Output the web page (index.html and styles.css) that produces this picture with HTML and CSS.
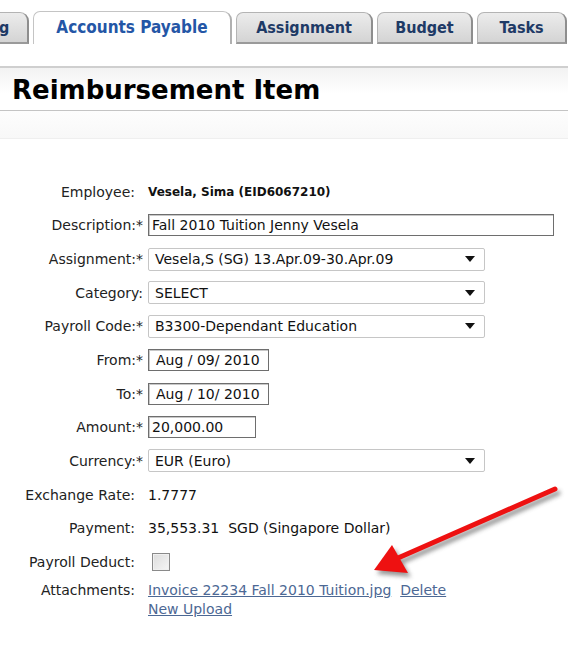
FILE: index.html
```html
<!DOCTYPE html>
<html>
<head>
<meta charset="utf-8">
<link rel="stylesheet" href="styles.css">
</head>
<body>
<div class="page">
  <div class="tabs">
    <div class="tab tab-first">g</div>
    <div class="tab tab-active">Accounts Payable</div>
    <div class="tab tab-assign">Assignment</div>
    <div class="tab tab-budget">Budget</div>
    <div class="tab tab-tasks">Tasks</div>
  </div>
  <div class="header"><h1>Reimbursement Item</h1></div>
  <div class="subband"></div>

  <div class="form">
    <div class="row">
      <div class="label label-static">Employee:</div>
      <div class="value bold">Vesela, Sima (EID6067210)</div>
    </div>
    <div class="row">
      <div class="label">Description:*</div>
      <div class="value"><div class="input input-desc">Fall 2010 Tuition Jenny Vesela</div></div>
    </div>
    <div class="row">
      <div class="label">Assignment:*</div>
      <div class="value"><div class="select"><span>Vesela,S (SG) 13.Apr.09-30.Apr.09</span><svg class="caret" width="10" height="6" viewBox="0 0 10 6"><path d="M0 0H10L5 6Z" fill="#111"/></svg></div></div>
    </div>
    <div class="row">
      <div class="label">Category:</div>
      <div class="value"><div class="select"><span>SELECT</span><svg class="caret" width="10" height="6" viewBox="0 0 10 6"><path d="M0 0H10L5 6Z" fill="#111"/></svg></div></div>
    </div>
    <div class="row">
      <div class="label">Payroll Code:*</div>
      <div class="value"><div class="select"><span>B3300-Dependant Education</span><svg class="caret" width="10" height="6" viewBox="0 0 10 6"><path d="M0 0H10L5 6Z" fill="#111"/></svg></div></div>
    </div>
    <div class="row">
      <div class="label">From:*</div>
      <div class="value"><div class="input input-date">Aug / 09/ 2010</div></div>
    </div>
    <div class="row">
      <div class="label">To:*</div>
      <div class="value"><div class="input input-date">Aug / 10/ 2010</div></div>
    </div>
    <div class="row">
      <div class="label">Amount:*</div>
      <div class="value"><div class="input input-amount">20,000.00</div></div>
    </div>
    <div class="row">
      <div class="label">Currency:*</div>
      <div class="value"><div class="select"><span>EUR (Euro)</span><svg class="caret" width="10" height="6" viewBox="0 0 10 6"><path d="M0 0H10L5 6Z" fill="#111"/></svg></div></div>
    </div>
    <div class="row">
      <div class="label label-static">Exchange Rate:</div>
      <div class="value">1.7777</div>
    </div>
    <div class="row">
      <div class="label label-static">Payment:</div>
      <div class="value">35,553.31&nbsp; SGD (Singapore Dollar)</div>
    </div>
    <div class="row">
      <div class="label label-static">Payroll Deduct:</div>
      <div class="value"><div class="checkbox"></div></div>
    </div>
    <div class="row row-attach">
      <div class="label label-static">Attachments:</div>
      <div class="value attach">
        <div><a href="#">Invoice 22234 Fall 2010 Tuition.jpg</a>&nbsp; <a href="#">Delete</a></div>
        <div><a href="#">New Upload</a></div>
      </div>
    </div>
  </div>

  <svg class="arrow" width="568" height="648" viewBox="0 0 568 648">
    <defs>
      <filter id="sh" x="-20%" y="-20%" width="140%" height="140%">
        <feGaussianBlur stdDeviation="2"/>
      </filter>
    </defs>
    <g transform="translate(3,4)" fill="#555" stroke="#555" opacity="0.6" filter="url(#sh)">
      <line x1="555" y1="489" x2="400" y2="557" stroke-width="5" stroke-linecap="round"/>
      <path d="M374 570 L392 545 L408 573 Z" stroke="none"/>
    </g>
    <line x1="555" y1="489" x2="398" y2="558" stroke="#ee1111" stroke-width="5" stroke-linecap="round"/>
    <path d="M374 570 L392 545 L408 573 Z" fill="#ee1111"/>
  </svg>
</div>
</body>
</html>
```

FILE: styles.css
```css
html, body {
  margin: 0;
  padding: 0;
  background: #ffffff;
}
.page {
  position: relative;
  width: 568px;
  height: 648px;
  overflow: hidden;
  font-family: "DejaVu Sans", Verdana, sans-serif;
  font-size: 14px;
  color: #111;
}
.tabs {
  display: flex;
  align-items: flex-end;
  gap: 4px;
  height: 44px;
  box-sizing: border-box;
}
.tab {
  height: 32px;
  box-sizing: border-box;
  font-family: "DejaVu Sans Condensed", "DejaVu Sans", sans-serif;
  font-stretch: condensed;
  font-weight: bold;
  font-size: 16px;
  line-height: 30px;
  text-align: center;
  color: #1e3a66;
  background: linear-gradient(#ececec, #d4d4d4);
  border: 1px solid #b4b4b4;
  border-right: 2px solid #8e8e8e;
  border-bottom: 2px solid #9a9a9a;
  border-radius: 7px 9px 0 0;
}
.tab-first {
  width: 30px;
  margin-left: -1px;
  text-align: left;
  border-left: none;
  border-radius: 0 9px 0 0;
}
.tab-active {
  width: 199px;
  height: 33px;
  background: #ffffff;
  color: #2456a6;
  border-color: #c4c4c4;
  border-right: 2px solid #b0b0b0;
  border-bottom: none;
  font-size: 17px;
}
.tab-assign { width: 137px; }
.tab-budget { width: 96px; }
.tab-tasks { width: 90px; }

.header {
  margin-top: 22px;
  height: 45px;
  box-sizing: border-box;
  border-top: 2px solid #cfcfcf;
  border-bottom: 1px solid #c4c4c4;
  background: linear-gradient(#f2f2f2, #ffffff 60%);
  padding-left: 12px;
}
.header h1 {
  margin: 0;
  font-family: "DejaVu Sans", sans-serif;
  font-size: 26px;
  font-weight: bold;
  line-height: 44px;
  color: #000;
}
.subband {
  height: 27px;
  background: linear-gradient(#fdfdfd, #f8f8f8);
  border-bottom: 1px solid #efefef;
}

.form {
  padding-top: 36px;
}
.row {
  display: flex;
  align-items: center;
  height: 33.65px;
}
.label {
  width: 144px;
  flex: none;
  text-align: right;
  box-sizing: border-box;
  padding-right: 1px;
  color: #222;
}
.label-static {
  padding-right: 9px;
}
.value {
  margin-left: 4px;
  color: #111;
}
.bold {
  font-weight: bold;
  font-size: 12px;
}

.input {
  box-sizing: border-box;
  height: 22px;
  line-height: 20px;
  border: 1px solid #6e6e6e;
  box-shadow: inset 1px 1px 0 #c8c8c8;
  padding: 0 3px;
  background: #fff;
  white-space: nowrap;
  overflow: hidden;
}
.input-desc { width: 406px; }
.input-date { width: 121px; padding-left: 7px; }
.input-amount { width: 108px; }

.select {
  box-sizing: border-box;
  width: 337px;
  height: 23px;
  border: 1px solid #c6c6c6;
  border-radius: 2px;
  background: #fff;
  display: flex;
  align-items: center;
  justify-content: space-between;
  padding: 0 9px 0 6px;
}
.caret { display: block; }

.checkbox {
  width: 16px;
  height: 16px;
  margin-left: 4px;
  border: 1px solid #8a8a8a;
  background: linear-gradient(135deg, #dcdcdc, #f6f6f6);
  box-shadow: inset 0 0 0 1px #f0f0f0;
}

.row-attach {
  height: auto;
  align-items: flex-start;
  line-height: 19px;
  margin-top: 2px;
}
.attach a {
  color: #4c6894;
  text-decoration: underline;
}

.arrow {
  position: absolute;
  left: 0;
  top: 0;
  pointer-events: none;
}
```
